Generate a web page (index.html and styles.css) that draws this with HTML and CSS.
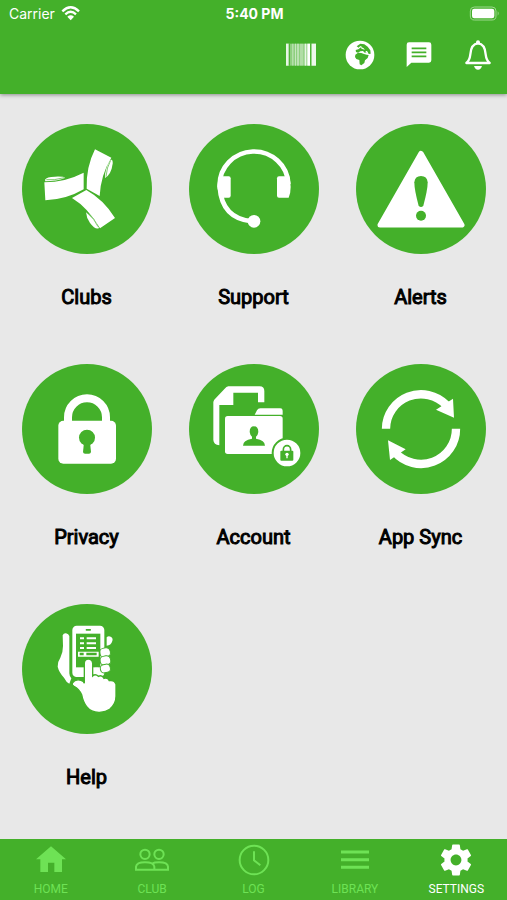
FILE: index.html
```html
<!DOCTYPE html>
<html lang="en">
<head>
    <meta charset="UTF-8">
    <meta name="viewport" content="width=device-width, initial-scale=1.0">
    <title>Settings</title>
    <link rel="stylesheet" href="styles.css">
</head>
<body>
    <header class="header">
        <div class="status-bar">
            <div class="carrier">
                <span>Carrier</span>
                <svg class="wifi" viewBox="184 14 60 48" aria-hidden="true">
                    <path d="M188 33Q213 9 238 33M197 42Q213 27 229 42" fill="none" stroke="#fff" stroke-width="7"/>
                    <path d="M203 49Q213 41 223 49L213 60Z" fill="#fff"/>
                </svg>
            </div>
            <span class="time">5:40 PM</span>
            <div class="battery">
                <svg viewBox="648 14 93 48" aria-hidden="true">
                    <rect x="652" y="20" width="77" height="39" rx="12" fill="none" stroke="#9bd88c" stroke-width="3"/>
                    <rect x="657" y="25" width="67" height="29" rx="7" fill="#fff"/>
                    <path d="M734 33q6 6 0 13z" fill="#9bd88c"/>
                </svg>
            </div>
        </div>

        <div class="toolbar">
            <button type="button" aria-label="Barcode">
                <svg viewBox="97 120 90 90">
                    <g fill="#fff">
                        <rect x="97" y="131" width="90" height="66" opacity=".4"/>
                        <rect x="97" y="131" width="8" height="66" opacity=".8"/>
                        <rect x="116" y="131" width="3" height="66" opacity=".5"/>
                        <rect x="124" y="131" width="3" height="66" opacity=".5"/>
                        <rect x="131" y="131" width="4" height="66" opacity=".6"/>
                        <rect x="139" y="131" width="10" height="66" opacity=".3"/>
                        <rect x="153" y="131" width="5" height="66" opacity=".8"/>
                        <rect x="161" y="131" width="8" height="66"/>
                        <rect x="174" y="131" width="13" height="66" opacity=".85"/>
                    </g>
                    <path d="M107 131v66M171 131v66" stroke="#44b02a" stroke-width="3"/>
                </svg>
            </button>
            <button type="button" aria-label="Language">
                <svg viewBox="272 120 90 90">
                    <circle cx="317" cy="165" r="43" fill="#fff"/>
                    <path d="M307 139l11-8 12 2 10 7 8 11 1 10-6 1-5-5-7 1-5-5-8 1-7 4-6-2-1-6 8-2 8-6 2-4-5 1-4 4z" fill="#44b02a"/>
                    <path d="M303 164l8-6 10 1 8 3 8 2 6 1-3 9-8 7-2 8-9 7-5-3-1-13-9-3-4-6z" fill="#44b02a"/>
                    <path d="M320 141l7 3 5 5-6-1-6-3zM333 153l6 8 4 0-5-8z" fill="#fff"/>
                </svg>
            </button>
            <button type="button" aria-label="Messages">
                <svg viewBox="450 120 90 90">
                    <path d="M465 127h60q7 0 7 7v47q0 7-7 7h-53l-14 13v-67q0-7 7-7z" fill="#fff"/>
                    <path d="M473 145h44M473 157h44M473 169h44" stroke="#44b02a" stroke-width="5"/>
                </svg>
            </button>
            <button type="button" aria-label="Notifications">
                <svg viewBox="627 120 90 90">
                    <path d="M637 189q10-8 12-26 2-31 23-33 21 2 23 33 2 18 12 26z" fill="none" stroke="#fff" stroke-width="7" stroke-linejoin="round"/>
                    <circle cx="672" cy="127" r="6" fill="#fff"/>
                    <path d="M660 198h24q-3 11-12 11t-12-11z" fill="#fff"/>
                </svg>
            </button>
        </div>
    </header>

    <main class="menu">
        <a class="menu-item" href="#clubs">
            <svg viewBox="36 25 390 390" aria-hidden="true">
                <g fill="#fff">
                    <path d="M103 200Q165 200 221 171V221Q168 252 106 254Z"/>
                    <path d="M105 192Q110 183 135 183Q163 182 165 187Q139 197 106 197Z"/>
                    <path d="M255 101L304 126Q272 178 269 241L230 219Q228 154 255 101Z"/>
                    <path d="M301 133Q309 129 308 144Q304 175 285 187Q284 160 301 133Z"/>
                    <path d="M186 247L229 223Q281 252 315 307L270 338Q234 276 186 247Z"/>
                    <path d="M228 290Q255 307 267 337Q257 344 240 322Q229 306 228 290Z"/>
                </g>
                <path d="M109 192Q130 195 163 186M302 134Q290 155 288 183M231 291Q254 310 264 333" fill="none" stroke="#44b02a" stroke-width="2"/>
            </svg>
            <span>Clubs</span>
        </a>
        <a class="menu-item" href="#support">
            <svg viewBox="36 25 390 390" aria-hidden="true">
                <path d="M334 205A103 101 0 1 0 128 212Q134 309 226 317" fill="none" stroke="#fff" stroke-width="14"/>
                <g fill="#fff">
                    <path d="M130 182h25q6 0 6 6v52q0 6-6 6h-21q-13-19-13-34 0-17 9-30z"/>
                    <path d="M306 182h30q5 17 5 32 0 18-6 32h-29q-6 0-6-6v-52q0-6 6-6z"/>
                    <circle cx="231" cy="317" r="19"/>
                </g>
            </svg>
            <span>Support</span>
        </a>
        <a class="menu-item" href="#alerts">
            <svg viewBox="36 25 390 390" aria-hidden="true">
                <path d="M231 113L354 328H108Z" fill="#fff" stroke="#fff" stroke-width="15" stroke-linejoin="round"/>
                <path d="M211 200Q213 181 231 181T251 200Q251 223 238 270Q231 278 224 270Q211 223 211 200Z" fill="#44b02a"/>
                <circle cx="231" cy="300" r="15" fill="#44b02a"/>
            </svg>
            <span>Alerts</span>
        </a>
        <a class="menu-item" href="#privacy">
            <svg viewBox="36 25 390 390" aria-hidden="true">
                <path d="M174 200v-15a57 57 0 0 1 114 0v15" fill="none" stroke="#fff" stroke-width="24"/>
                <rect x="145" y="195" width="173" height="129" rx="15" fill="#fff"/>
                <circle cx="231" cy="246" r="24" fill="#44b02a"/>
                <path d="M222 260h18l3 29q-1 5-6 5h-12q-5 0-6-5z" fill="#44b02a"/>
            </svg>
            <span>Privacy</span>
        </a>
        <a class="menu-item" href="#account">
            <svg viewBox="36 25 390 390" aria-hidden="true">
                <g fill="#fff">
                    <path d="M154 92h94q14 0 14 14v34h-19v-29h-74v37h-42v121q-17-2-18-16V139q1-6 7-11l27-29q5-6 11-7z"/>
                    <path d="M233 177l7-13q3-6 10-6h60q7 0 7 7v12z"/>
                    <rect x="144" y="181" width="173" height="114" rx="8"/>
                </g>
                <path d="M231 212q13 0 13 17-1 9-7 14v6q27 4 27 21h-66q0-17 27-21v-6q-6-5-7-14 0-17 13-17z" fill="#44b02a"/>
                <circle cx="330" cy="292" r="43" fill="#fff" stroke="#44b02a" stroke-width="6"/>
                <path d="M319 289v-7a11 12 0 0 1 22 0v7" fill="none" stroke="#44b02a" stroke-width="5"/>
                <rect x="310" y="285" width="39" height="30" rx="3" fill="#44b02a"/>
                <circle cx="330" cy="296" r="5" fill="#fff"/>
                <path d="M328 297h4v11h-4z" fill="#fff"/>
            </svg>
            <span>Account</span>
        </a>
        <a class="menu-item" href="#sync">
            <svg viewBox="36 25 390 390" aria-hidden="true">
                <path d="M126 219A105 104 0 0 1 307 148M336 219A105 105 0 0 1 152 289" fill="none" stroke="#fff" stroke-width="25"/>
                <path d="M327 129L330 186L276 162ZM132 254L185 281L138 313Z" fill="#fff"/>
            </svg>
            <span>App Sync</span>
        </a>
        <a class="menu-item" href="#help">
            <svg viewBox="36 25 390 390" aria-hidden="true">
                <g fill="#fff">
                    <path d="M158 119q3-7 10-6 8 2 10 8v112q0 8 6 15l-6 16q-9-4-16-18-15-16-19-33-1-14 8-27 8-15 8-35z"/>
                    <rect x="187" y="90" width="96" height="154" rx="13"/>
                    <path d="M290 125q5-5 12-2 8 4 5 13-4 14-17 14z"/>
                    <g stroke="#44b02a" stroke-width="3">
                        <rect x="269" y="157" width="32" height="27" rx="12" transform="rotate(-12 285 170)"/>
                        <rect x="270" y="181" width="32" height="27" rx="12" transform="rotate(-12 286 194)"/>
                        <rect x="271" y="206" width="30" height="25" rx="11" transform="rotate(-12 286 218)"/>
                    </g>
                </g>
                <rect x="198" y="114" width="73" height="101" fill="#44b02a"/>
                <rect x="227" y="100" width="16" height="5" rx="2" fill="#44b02a"/>
                <path d="M210 128h12M230 128h28M210 143h12M230 143h28M210 157h12M230 157h28" stroke="#fff" stroke-width="6"/>
                <path d="M204 168h62v15h-62z" fill="#fff"/>
                <path d="M209 175h12M229 175h31" stroke="#44b02a" stroke-width="7"/>
                <path d="M223 263V203q0-13 12-13t13 13v38q8-8 17 1 11-5 17 6 11-4 16 7 16-3 20 11v36q0 23-19 39-11 8-30 9-25 1-39-17-11-14-15-36-8-17-23-25-7-4-5-10 9-13 26-8 9 3 10 9z" fill="#fff" stroke="#44b02a" stroke-width="4"/>
                <path d="M255 216h9v11h-9z" fill="#fff"/>
            </svg>
            <span>Help</span>
        </a>
    </main>

    <nav class="tab-bar">
        <a class="tab" href="#home">
            <svg viewBox="103 39 102 102" aria-hidden="true">
                <path d="M154 49L199 88H187V126H164V98H145V126H122V88H109Z" fill="currentColor"/>
            </svg>
            <span>HOME</span>
        </a>
        <a class="tab" href="#club">
            <svg viewBox="407 39 102 102" aria-hidden="true">
                <g fill="none" stroke="currentColor" stroke-width="6">
                    <circle cx="437" cy="73" r="14"/>
                    <circle cx="479" cy="73" r="14"/>
                    <path d="M410 119v-9q2-13 27-13 26 0 28 13v9zM458 101q7-4 21-4 26 0 27 13v9h-41"/>
                </g>
            </svg>
            <span>CLUB</span>
        </a>
        <a class="tab" href="#log">
            <svg viewBox="0 0 102 102" aria-hidden="true">
                <g fill="none" stroke="currentColor" stroke-width="6">
                    <circle cx="51" cy="51" r="43"/>
                    <path d="M51 25v27l19 15"/>
                </g>
            </svg>
            <span>LOG</span>
        </a>
        <a class="tab" href="#library">
            <svg viewBox="252 39 102 102" aria-hidden="true">
                <path d="M261 66h84M261 89h84M261 112h84" stroke="currentColor" stroke-width="9"/>
            </svg>
            <span>LIBRARY</span>
        </a>
        <a class="tab active" href="#settings">
            <svg viewBox="1 1 22 22" aria-hidden="true">
                <path fill="currentColor" d="M19.43 12.98c.04-.32.07-.64.07-.98s-.03-.66-.07-.98l2.11-1.65c.19-.15.24-.42.12-.64l-2-3.46c-.12-.22-.39-.3-.61-.22l-2.49 1c-.52-.4-1.08-.73-1.69-.98l-.38-2.65C14.46 2.18 14.25 2 14 2h-4c-.25 0-.46.18-.49.42l-.38 2.65c-.61.25-1.17.59-1.69.98l-2.49-1c-.23-.09-.49 0-.61.22l-2 3.46c-.13.22-.07.49.12.64l2.11 1.65c-.04.32-.07.65-.07.98s.03.66.07.98l-2.11 1.65c-.19.15-.24.42-.12.64l2 3.46c.12.22.39.3.61.22l2.49-1c.52.4 1.08.73 1.69.98l.38 2.65c.03.24.24.42.49.42h4c.25 0 .46-.18.49-.42l.38-2.65c.61-.25 1.17-.59 1.69-.98l2.49 1c.23.09.49 0 .61-.22l2-3.46c.12-.22.07-.49-.12-.64l-2.11-1.65zM12 15.5c-1.93 0-3.5-1.57-3.5-3.5s1.57-3.5 3.5-3.5 3.5 1.57 3.5 3.5-1.57 3.5-3.5 3.5z"/>
            </svg>
            <span>SETTINGS</span>
        </a>
    </nav>
</body>
</html>
```

FILE: styles.css
```css
* {
    margin: 0;
    padding: 0;
    box-sizing: border-box;
}

body {
    display: flex;
    flex-direction: column;
    min-height: 100vh;
    font-family: Roboto, sans-serif;
    background-color: #e8e8e8;
}

a {
    color: inherit;
    text-decoration: none;
}

svg {
    display: block;
}

/* Header */
.header {
    background-color: #44b02a;
    color: #fff;
    padding-bottom: 24px;
    box-shadow: 0 1px 4px rgba(0, 0, 0, 0.4);
}

.status-bar {
    display: grid;
    grid-template-columns: 1fr auto 1fr;
    align-items: center;
    height: 26px;
    padding: 0 7px 0 9px;
    font-family: Inter, sans-serif;
    font-size: 14px;
}

.carrier {
    display: flex;
    align-items: center;
    gap: 6px;
}

.wifi {
    width: 20px;
    height: 16px;
}

.time {
    font-weight: 700;
}

.battery {
    justify-self: end;
}

.battery svg {
    width: 31px;
    height: 16px;
}

.toolbar {
    display: flex;
    justify-content: flex-end;
    gap: 29px;
    padding: 14px 14px 0;
}

.toolbar button {
    background: none;
    border: none;
    cursor: pointer;
}

.toolbar svg {
    width: 30px;
    height: 30px;
}

/* Menu */
.menu {
    flex: 1;
    display: grid;
    grid-template-columns: repeat(3, 1fr);
    align-content: start;
    gap: 55px 0;
    padding: 30px 3px 0;
}

.menu-item {
    display: flex;
    flex-direction: column;
    align-items: center;
    gap: 31px;
    color: #000;
    font-size: 20px;
    line-height: 24px;
    -webkit-text-stroke: 1px #000;
}

.menu-item svg {
    width: 130px;
    height: 130px;
    border-radius: 50%;
    background-color: #44b02a;
}

/* Tab bar */
.tab-bar {
    display: flex;
    background-color: #44b02a;
    padding: 4px 0;
}

.tab {
    flex: 1;
    display: flex;
    flex-direction: column;
    align-items: center;
    gap: 5px;
    color: #6ee255;
    font-size: 12px;
    line-height: 14px;
}

.tab svg {
    width: 34px;
    height: 34px;
}

.tab.active {
    color: #fff;
}
```
